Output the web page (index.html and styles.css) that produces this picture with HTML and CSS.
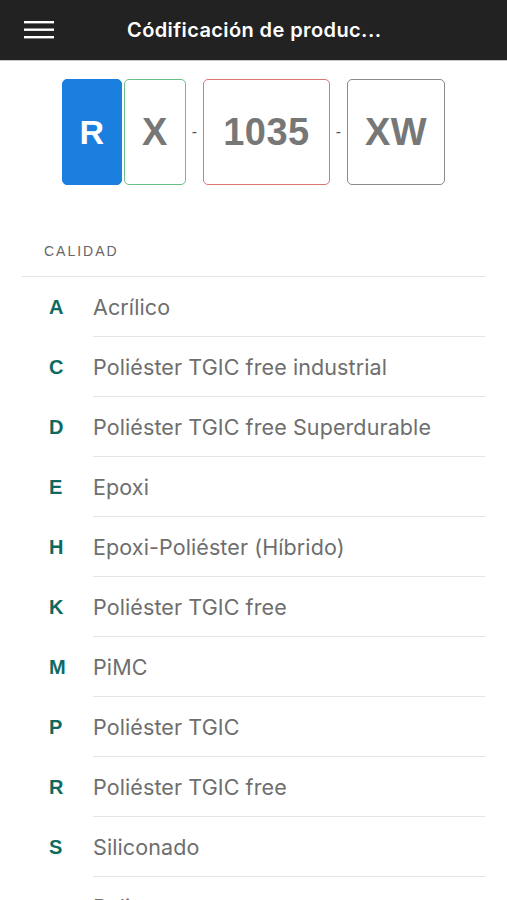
FILE: index.html
```html
<!DOCTYPE html>
<html lang="es">
<head>
    <meta charset="UTF-8" />
    <meta name="viewport" content="width=device-width, initial-scale=1.0" />
    <title>Códificación de productos</title>
    <link rel="stylesheet" href="styles.css">
</head>
<body>
    <header class="topbar">
        <button class="menu-btn" aria-label="Menú">
            <svg width="30" height="18" viewBox="0 0 30 18">
                <rect x="0" y="0" width="30" height="2.4" fill="#fff"/>
                <rect x="0" y="7.5" width="30" height="2.4" fill="#fff"/>
                <rect x="0" y="15" width="30" height="2.4" fill="#fff"/>
            </svg>
        </button>
        <h1 class="title">Códificación de produc...</h1>
    </header>

    <div class="code">
        <div class="seg seg-active seg-r">R</div>
        <div class="seg seg-green">X</div>
        <span class="dash">-</span>
        <div class="seg seg-red">1035</div>
        <span class="dash">-</span>
        <div class="seg seg-grey">XW</div>
    </div>

    <section class="group">
        <h2 class="group-title">CALIDAD</h2>
        <ul class="options">
            <li><span class="key">A</span><span class="label">Acrílico</span></li>
            <li><span class="key">C</span><span class="label">Poliéster TGIC free industrial</span></li>
            <li><span class="key">D</span><span class="label">Poliéster TGIC free Superdurable</span></li>
            <li><span class="key">E</span><span class="label">Epoxi</span></li>
            <li><span class="key">H</span><span class="label">Epoxi-Poliéster (Híbrido)</span></li>
            <li><span class="key">K</span><span class="label">Poliéster TGIC free</span></li>
            <li><span class="key">M</span><span class="label">PiMC</span></li>
            <li><span class="key">P</span><span class="label">Poliéster TGIC</span></li>
            <li><span class="key">R</span><span class="label">Poliéster TGIC free</span></li>
            <li><span class="key">S</span><span class="label">Siliconado</span></li>
            <li><span class="key">U</span><span class="label">Poliuretano</span></li>
        </ul>
    </section>
</body>
</html>
```

FILE: styles.css
```css
body {
    font-family: "Liberation Sans", Arial, sans-serif;
    background-color: #fff;
    margin: 0;
    overflow: hidden;
}
.topbar {
    height: 60px;
    background-color: #222;
    border-bottom: 1px solid #c8c8c8;
    display: flex;
    align-items: center;
    padding-left: 24px;
}
.menu-btn {
    background: none;
    border: none;
    padding: 0;
    width: 30px;
    height: 18px;
    display: flex;
}
.title {
    margin: 0 0 0 73px;
    color: #fff;
    font-size: 20px;
    font-weight: 600;
    font-family: "Inter", "Liberation Sans", sans-serif;
    letter-spacing: 0.4px;
}
.code {
    display: flex;
    justify-content: center;
    align-items: center;
    padding-top: 18px;
}
.seg {
    box-sizing: border-box;
    height: 106px;
    border-radius: 5px;
    border: 1.5px solid #999;
    display: flex;
    align-items: center;
    justify-content: center;
    font-size: 38px;
    font-weight: bold;
    letter-spacing: 0.5px;
    color: #777;
}
.seg-r {
    width: 60px;
    background-color: #1a7fdf;
    border-color: #1a7fdf;
    color: #fff;
    font-size: 34px;
}
.seg-green {
    width: 62px;
    margin-left: 2px;
    border-color: #6cbf8a;
}
.seg-red {
    width: 127px;
    border-color: #e07373;
}
.seg-grey {
    width: 98px;
    border-color: #8a8a8a;
}
.dash {
    width: 17px;
    text-align: center;
    color: #555;
    font-size: 16px;
}
.group {
    margin: 58px 22px 0;
}
.group-title {
    margin: 0 0 0 22px;
    font-size: 14px;
    font-weight: normal;
    letter-spacing: 2px;
    color: #666;
    padding-bottom: 17px;
}
.options {
    list-style: none;
    margin: 0;
    padding: 0;
    border-top: 1px solid #e4e4e4;
}
.options li {
    height: 60px;
    display: flex;
    align-items: center;
}
.key {
    width: 71px;
    padding-left: 27px;
    box-sizing: border-box;
    color: #0e6a60;
    font-weight: bold;
    font-size: 20px;
}
.label {
    flex: 1;
    height: 59px;
    display: flex;
    align-items: center;
    border-bottom: 1px solid #e4e4e4;
    color: #6e6e6e;
    font-size: 21.5px;
    letter-spacing: 0.1px;
    font-family: "Inter", "Liberation Sans", sans-serif;
}
```
